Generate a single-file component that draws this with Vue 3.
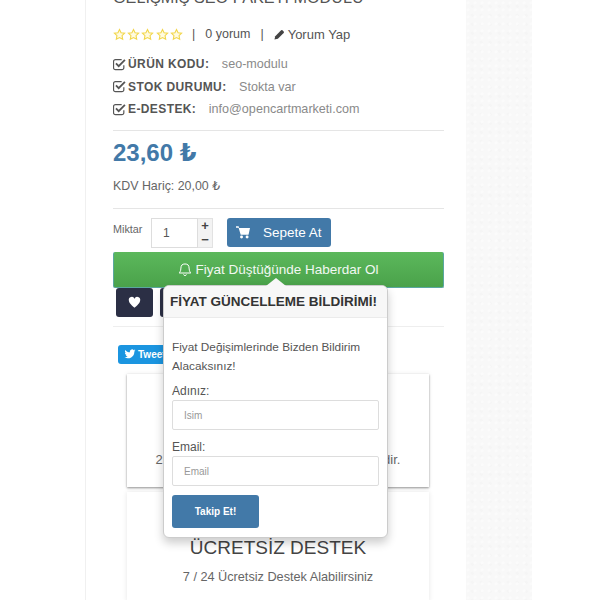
<script setup>
const stars = [1, 2, 3, 4, 5]
const specs = [
  { label: 'ÜRÜN KODU:', value: 'seo-modulu' },
  { label: 'STOK DURUMU:', value: 'Stokta var' },
  { label: 'E-DESTEK:', value: 'info@opencartmarketi.com' }
]
</script>

<template>
  <div class="page">
    <main class="column">
      <h1 class="title">GELİŞMİŞ SEO PAKETİ MODÜLÜ</h1>

      <div class="rating">
        <span class="stars">
          <svg v-for="s in stars" :key="s" class="star" viewBox="0 0 24 24">
            <path d="M12 2.600l2.900 6.100 6.600.9-4.800 4.600 1.200 6.600L12 17.600l-5.900 3.200 1.200-6.600-4.800-4.600 6.600-.9z" />
          </svg>
        </span>
        <span class="sep">|</span>
        <span>0 yorum</span>
        <span class="sep">|</span>
        <span class="write">
          <svg class="pencil" viewBox="0 0 24 24"><path d="M1 23l1.800-7.400L15.500 2.900a2.200 2.200 0 0 1 3.100 0l2.500 2.500a2.200 2.200 0 0 1 0 3.100L8.400 21.200z" /></svg>
          Yorum Yap
        </span>
      </div>

      <ul class="specs">
        <li v-for="item in specs" :key="item.label" class="spec">
          <svg class="check" viewBox="0 0 24 24">
            <path class="box" d="M20 13.500V18a3.500 3.500 0 0 1-3.500 3.500h-12A3.500 3.500 0 0 1 1 18V6.500A3.500 3.500 0 0 1 4.500 3H16" />
            <path class="tick" d="M5.500 10l5 5L22 3.500" />
          </svg>
          <strong>{{ item.label }}</strong>
          <span class="spec-value">{{ item.value }}</span>
        </li>
      </ul>

      <div class="price-block">
        <div class="price">23,60 ₺</div>
        <div class="tax">KDV Hariç: 20,00 ₺</div>
      </div>

      <div class="buy-block">
        <div class="qty-row">
          <span class="qty-label">Miktar</span>
          <div class="qty-input">1</div>
          <div class="steppers">
            <span class="step">+</span>
            <span class="step">−</span>
          </div>
          <button class="cart-btn">
            <svg class="cart" viewBox="0 0 24 24">
              <path d="M0 2h4.500l1 3H24l-2.500 11.500H8L4.500 4.500H0z" />
              <circle cx="9.500" cy="20.500" r="2.500" />
              <circle cx="19" cy="20.500" r="2.500" />
            </svg>
            Sepete At
          </button>
        </div>

        <button class="notify-btn">
          <svg class="bell" viewBox="0 0 24 24">
            <path d="M12 2.500a7 7 0 0 0-7 7c0 6-3 8.500-3 8.500h20s-3-2.500-3-8.500a7 7 0 0 0-7-7z" />
            <path d="M9.500 20.500a2.600 2.600 0 0 0 5 0" />
          </svg>
          Fiyat Düştüğünde Haberdar Ol
        </button>

        <div class="wish-row">
          <button class="dark-btn">
            <svg class="heart" viewBox="0 0 24 24"><path d="M12 21.500S1.500 14.500 1.500 8A5.500 5.500 0 0 1 12 5a5.500 5.500 0 0 1 10.500 3c0 6.500-10.500 13.500-10.500 13.500z" /></svg>
          </button>
          <button class="dark-btn"></button>
        </div>

        <div class="share-row">
          <span class="tweet">
            <svg class="bird" viewBox="0 0 24 24"><path d="M23 5c-.8.400-1.700.600-2.600.700.900-.600 1.600-1.400 2-2.500-.9.500-1.800.900-2.900 1.100A4.500 4.500 0 0 0 11.800 8.500C8 8.300 4.700 6.500 2.500 3.800c-1.200 2.100-.6 4.700 1.400 6-.7 0-1.400-.2-2-.5 0 2.200 1.500 4 3.600 4.500-.7.200-1.400.2-2 .1.600 1.800 2.200 3.100 4.200 3.100A9 9 0 0 1 1 18.500 12.800 12.800 0 0 0 20.700 7.100c.9-.6 1.700-1.300 2.300-2.100z" /></svg>
            Tweet
          </span>
        </div>
      </div>

      <section class="card card-one">
        <p class="card-text wide">25 TL Üzeri Siparişlerde Kargo Ücretsizdir.</p>
      </section>
      <section class="card card-two">
        <h2 class="card-title">ÜCRETSİZ DESTEK</h2>
        <p class="card-text">7 / 24 Ücretsiz Destek Alabilirsiniz</p>
      </section>

      <aside class="popover">
        <span class="arrow"></span>
        <h3 class="pop-title">FİYAT GÜNCELLEME BİLDİRİMİ!</h3>
        <div class="pop-body">
          <p class="pop-text">Fiyat Değişimlerinde Bizden Bildirim Alacaksınız!</p>
          <label class="field">
            <span class="field-label">Adınız:</span>
            <input class="field-input" placeholder="İsim" />
          </label>
          <label class="field field-mail">
            <span class="field-label">Email:</span>
            <input class="field-input" placeholder="Email" />
          </label>
          <button class="follow-btn">Takip Et!</button>
        </div>
      </aside>
    </main>
    <div class="texture"></div>
  </div>
</template>

<style>
html, body { margin: 0; background: #fff; overflow: hidden; }
</style>

<style scoped>
* { box-sizing: border-box; }
.page {
  width: 600px;
  height: 600px;
  overflow: hidden;
  display: flex;
  padding-left: 85px;
  font-family: "Liberation Sans", "DejaVu Sans", sans-serif;
  color: #666;
  font-size: 12px;
}
.column {
  position: relative;
  width: 381px;
  height: 600px;
  flex: none;
  padding: 0 22px 0 27px;
  background: #fff;
  border-left: 1px solid #f0f0f0;
  overflow: hidden;
}
.texture {
  width: 66px;
  height: 600px;
  flex: none;
  background-color: #f8f8f8;
  background-image:
    radial-gradient(circle at 30% 40%, #fbfbfb 1px, transparent 2px),
    radial-gradient(circle at 70% 70%, #f5f5f5 1px, transparent 2px);
  background-size: 7px 7px, 9px 9px;
}
.title {
  margin: -13px 0 0;
  height: 37px;
  font-size: 16.200px;
  line-height: 20px;
  font-weight: 400;
  color: #555;
  white-space: nowrap;
}
.rating {
  display: flex;
  align-items: center;
  height: 20px;
  font-size: 12.500px;
  color: #555;
}
.stars { display: flex; gap: 1.200px; width: 69px; }
.star { width: 13px; height: 13px; flex: none; fill: #fffbe0; stroke: #f2d64b; stroke-width: 2; }
.sep { margin: 0 10px; }
.write { display: flex; align-items: center; gap: 3px; font-size: 13px; }
.pencil { width: 11px; height: 11px; fill: #444; }
.specs { list-style: none; margin: 9px 0 0; padding: 0 0 9px; border-bottom: 1px solid #e5e5e5; }
.spec { display: flex; align-items: center; height: 22.500px; white-space: nowrap; }
.check { width: 13px; height: 13px; margin-right: 2px; fill: none; stroke: #555; }
.box { stroke-width: 2.200; }
.tick { stroke-width: 3.400; }
.spec strong { font-size: 12px; color: #555; letter-spacing: .4px; }
.spec-value { margin-left: 12.500px; font-size: 12.600px; color: #8a8a8a; }
.price-block { padding-bottom: 15px; border-bottom: 1px solid #e5e5e5; }
.price { margin-top: 8px; font-size: 24px; line-height: 28px; font-weight: 700; color: #4279a8; }
.tax { margin-top: 12px; font-size: 12.400px; line-height: 14px; color: #666; }
.buy-block { padding-top: 9px; }
.qty-row { display: flex; align-items: flex-start; height: 30px; }
.qty-label { width: 38px; font-size: 10.800px; line-height: 23px; color: #666; }
.qty-input {
  width: 47px;
  height: 30px;
  padding-left: 11px;
  border: 1px solid #ddd;
  font-size: 12px;
  line-height: 28px;
  color: #555;
}
.steppers { width: 15px; height: 30px; display: flex; flex-direction: column; border: 1px solid #e2e2e2; border-left: 0; }
.step { height: 14px; display: flex; align-items: center; justify-content: center; font-size: 13px; font-weight: 700; color: #444; background: #f3f3f3; line-height: 13px; }
.cart-btn {
  display: flex;
  align-items: center;
  width: 104px;
  height: 29px;
  margin-left: 14px;
  padding: 0 0 0 9px;
  border: 0;
  border-radius: 3px;
  background: #4279a8;
  color: #fff;
  font: 13.500px "Liberation Sans", sans-serif;
}
.cart { width: 14px; height: 14px; margin-right: 13px; fill: #fff; }
.notify-btn {
  display: flex;
  align-items: center;
  justify-content: center;
  gap: 3px;
  width: 331px;
  height: 36px;
  margin-top: 4px;
  border: 1px solid #5aa7a0;
  border-width: 0 1px 1px;
  border-radius: 2px;
  background: linear-gradient(#5cb85c, #4aa24a);
  color: #f2f8f2;
  font: 13.500px "Liberation Sans", sans-serif;
}
.bell { width: 14px; height: 15px; fill: none; stroke: #fff; stroke-width: 1.700; }
.wish-row { display: flex; gap: 7px; height: 39px; padding-left: 3px; border-bottom: 1px solid #eee; }
.dark-btn {
  display: flex;
  align-items: center;
  justify-content: center;
  width: 37px;
  height: 29px;
  padding: 0;
  border: 0;
  border-radius: 3px;
  background: #2b2f45;
}
.heart { width: 13px; height: 13px; fill: #fff; }
.share-row { height: 47px; padding: 18px 0 0 5px; }
.tweet {
  display: flex;
  align-items: center;
  gap: 2px;
  width: 60px;
  height: 19px;
  padding-left: 6px;
  border-radius: 3px;
  background: #1b95e0;
  color: #fff;
  font-size: 10px;
  font-weight: 700;
}
.bird { width: 12px; height: 12px; fill: #fff; flex: none; }
.card {
  width: 302px;
  margin-left: 14px;
  text-align: center;
  background: #fff;
  box-shadow: 0 0 5px rgba(0, 0, 0, .1);
}
.card-one { height: 113px; padding-top: 79px; box-shadow: 0 0 5px rgba(0, 0, 0, .08), 0 1px 2px rgba(0, 0, 0, .4); }
.card-two { height: 110px; margin-top: 5px; padding-top: 45px; }
.card-title { margin: 0; font-size: 19px; line-height: 22px; font-weight: 400; color: #444; }
.card-text { margin: 0; font-size: 12.700px; line-height: 14px; color: #666; white-space: nowrap; }
.card-text.wide { font-size: 13px; }
.card-two .card-text { margin-top: 11px; }
.popover {
  position: absolute;
  left: 77px;
  top: 285px;
  width: 225px;
  height: 253px;
  background: #fff;
  border-radius: 6px;
  border: 1px solid #ccc;
  box-shadow: 0 5px 10px rgba(0, 0, 0, .2);
  z-index: 2;
}
.arrow {
  position: absolute;
  left: 102px;
  top: -8px;
  width: 0;
  height: 0;
  border-left: 10px solid transparent;
  border-right: 10px solid transparent;
  border-bottom: 8px solid #f7f7f7;
}
.pop-title {
  margin: 0;
  height: 32px;
  padding-left: 6px;
  font-size: 13.500px;
  line-height: 31px;
  font-weight: 700;
  color: #333;
  background: #f7f7f7;
  border-bottom: 1px solid #ebebeb;
  border-radius: 5px 5px 0 0;
  white-space: nowrap;
  overflow: hidden;
}
.pop-body { padding: 20px 8px 0; }
.pop-text { margin: 0; font-size: 11.800px; line-height: 19px; color: #555; }
.field { display: block; margin-top: 8px; }
.field-mail { margin-top: 10px; }
.field-label { display: block; font-size: 12px; line-height: 14px; color: #555; }
.field-input {
  display: block;
  width: 207px;
  height: 30px;
  margin-top: 2px;
  padding: 0 11px;
  border: 1px solid #ddd;
  border-radius: 2px;
  font: 10px "Liberation Sans", sans-serif;
  color: #555;
  background: #fff;
  outline: none;
}
.field-input::placeholder { color: #999; }
.follow-btn {
  display: block;
  width: 87px;
  height: 33px;
  margin-top: 9px;
  padding: 0;
  border: 0;
  border-radius: 3px;
  background: #4279a8;
  color: #fff;
  font: 700 10px "Liberation Sans", sans-serif;
}
</style>
